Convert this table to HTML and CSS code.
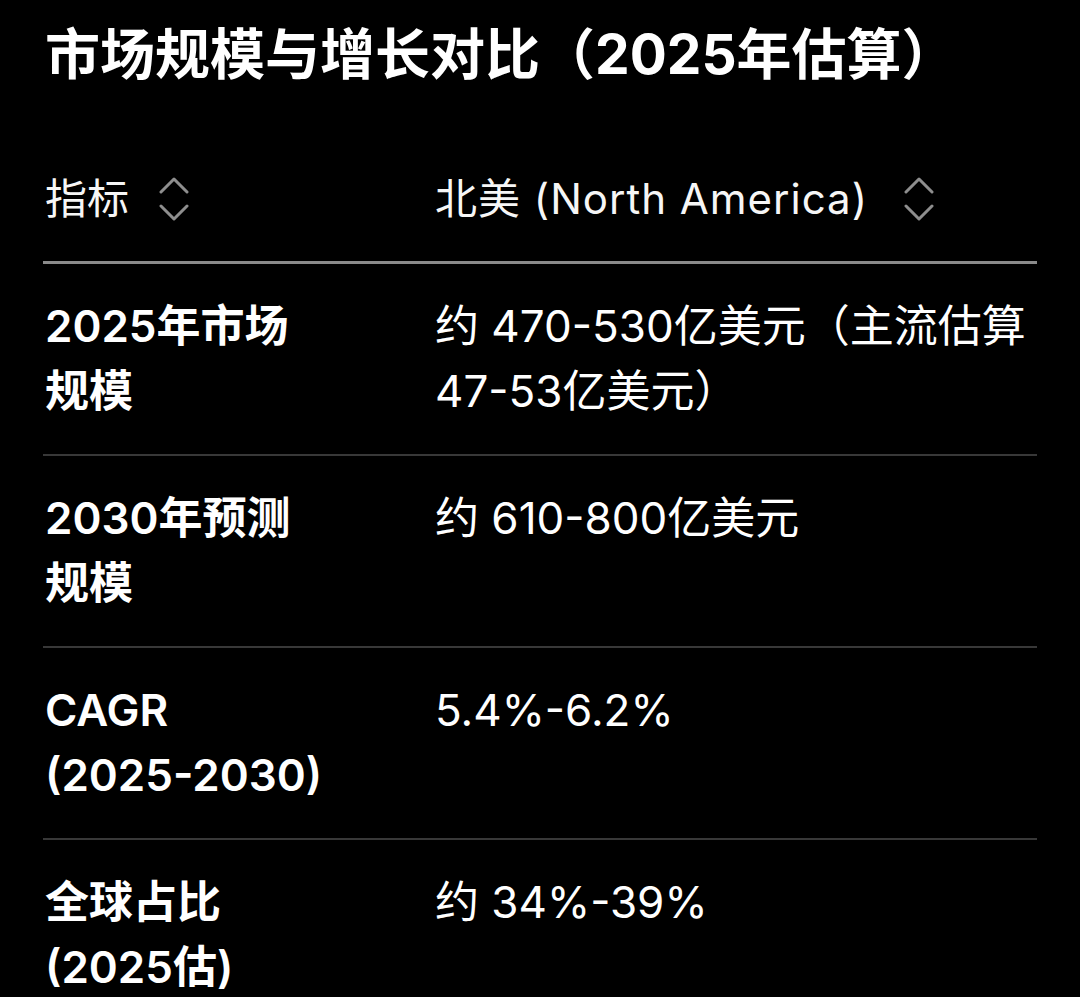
FILE: index.html
```html
<!DOCTYPE html>
<html lang="zh-CN">
<head>
<meta charset="utf-8">
<title>市场规模与增长对比</title>
<link rel="stylesheet" href="styles.css">
</head>
<body>
<main class="page">
  <h1 class="title">市场规模与增长对比（2025年估算）</h1>
  <table class="data">
    <colgroup><col class="c1"><col class="c2"></colgroup>
    <thead>
      <tr>
        <th class="head-first"><span class="th-inner">指标<svg class="sort" viewBox="0 0 30 44" width="30" height="44"><polyline points="2,15 15,2 28,15"/><polyline points="2,29 15,42 28,29"/></svg></span></th>
        <th><span class="th-inner th-wide">北美 (North America)<svg class="sort" viewBox="0 0 30 44" width="30" height="44"><polyline points="2,15 15,2 28,15"/><polyline points="2,29 15,42 28,29"/></svg></span></th>
      </tr>
    </thead>
    <tbody>
      <tr>
        <td class="cell-first">2025年市场规模</td>
        <td>约 470-530亿美元（主流估算 47-53亿美元）</td>
      </tr>
      <tr>
        <td class="cell-first">2030年预测规模</td>
        <td>约 610-800亿美元</td>
      </tr>
      <tr>
        <td class="cell-first">CAGR <span class="nobr">(2025-2030)</span></td>
        <td>5.4%-6.2%</td>
      </tr>
      <tr>
        <td class="cell-first">全球占比 <span class="nobr">(2025估)</span></td>
        <td>约 34%-39%</td>
      </tr>
    </tbody>
  </table>
</main>
</body>
</html>
```

FILE: styles.css
```css
html, body {
  margin: 0;
  padding: 0;
  background: #000;
  overflow: hidden;
}

body {
  color: #fff;
  font-family: Inter, "Noto Sans CJK SC", "Noto Sans", sans-serif;
}

.page {
  padding: 0 43px;
}

.title {
  margin: 18px 0 0 2px;
  font-size: 55px;
  line-height: 72px;
  font-weight: 700;
  letter-spacing: 0;
}

.data {
  margin-top: 47px;
  width: 994px;
  border-collapse: collapse;
  table-layout: fixed;
}

.c1 { width: 392px; }

.data th {
  text-align: left;
  font-weight: 400;
  font-size: 42px;
  line-height: 60px;
  padding: 32px 0;
  border-bottom: 3px solid #8a8a8a;
  color: #f6f6f6;
}

.data .head-first {
  padding-left: 2px;
}

.th-inner {
  display: inline-flex;
  align-items: center;
  gap: 30px;
}

.th-wide {
  gap: 36px;
  letter-spacing: 1px;
}

.sort {
  fill: none;
  stroke: #8e8e8e;
  stroke-width: 3;
  stroke-linecap: round;
  stroke-linejoin: round;
}

.data td {
  vertical-align: top;
  font-size: 44px;
  line-height: 65px;
  padding: 30px 0;
  border-bottom: 2px solid #383838;
  font-weight: 400;
}

.data .cell-first {
  padding-left: 2px;
  padding-right: 114px;
  font-weight: 600;
}

.nobr {
  white-space: nowrap;
}
```
